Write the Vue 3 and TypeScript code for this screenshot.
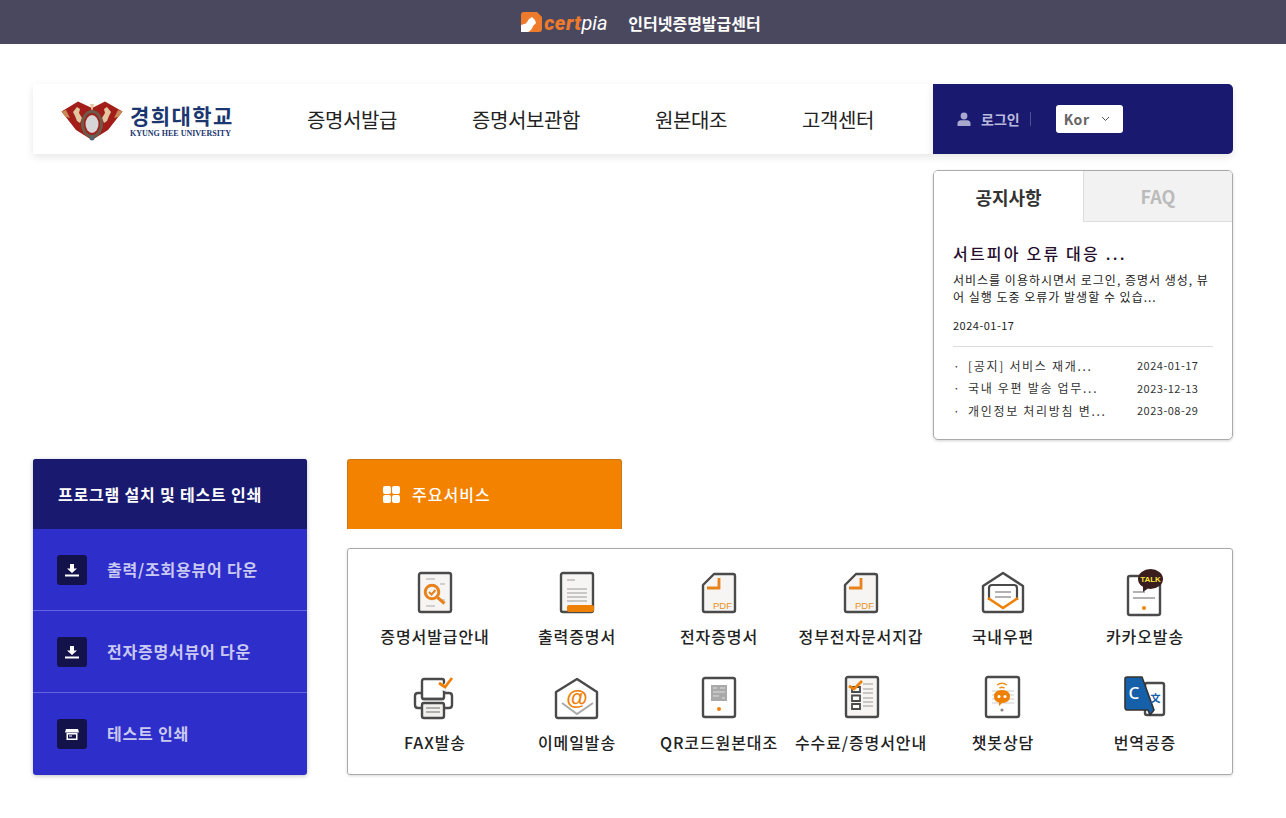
<script setup lang="ts">
interface Notice {
  title: string
  date: string
}

const navItems: string[] = ['증명서발급', '증명서보관함', '원본대조', '고객센터']

const notices: Notice[] = [
  { title: '[공지] 서비스 재개...', date: '2024-01-17' },
  { title: '국내 우편 발송 업무...', date: '2023-12-13' },
  { title: '개인정보 처리방침 변...', date: '2023-08-29' },
]

const downloads = [
  { label: '출력/조회용뷰어 다운', icon: 'down' },
  { label: '전자증명서뷰어 다운', icon: 'down' },
  { label: '테스트 인쇄', icon: 'print' },
]

const services = [
  { label: '증명서발급안내', icon: 'guide' },
  { label: '출력증명서', icon: 'paper' },
  { label: '전자증명서', icon: 'pdf' },
  { label: '정부전자문서지갑', icon: 'pdf' },
  { label: '국내우편', icon: 'post' },
  { label: '카카오발송', icon: 'kakao' },
  { label: 'FAX발송', icon: 'fax' },
  { label: '이메일발송', icon: 'email' },
  { label: 'QR코드원본대조', icon: 'qr' },
  { label: '수수료/증명서안내', icon: 'fee' },
  { label: '챗봇상담', icon: 'bot' },
  { label: '번역공증', icon: 'trans' },
]
</script>

<template>
  <div class="page">
    <div class="topbar">
      <svg class="cert-mark" width="21" height="20" viewBox="0 0 21 20">
        <path d="M3 0H16L21 5V17Q21 20 18 20H3Q0 20 0 17V3Q0 0 3 0Z" fill="#ee7a2c" />
        <path d="M0 20V13L5 11.5L8 7L11 5L14 8L15 11L12 14Q11 18 7 20Z" fill="#fff" />
      </svg>
      <span class="cert-name"><b>cert</b><i>pia</i></span>
      <span class="top-title">인터넷증명발급센터</span>
    </div>

    <main class="wrap">
      <header class="head">
        <div class="head-main">
          <div class="logo">
            <svg width="64" height="44" viewBox="0 0 64 44">
              <path d="M1.5 14.5L18 4.5L32 11L45 4.5L62.5 14.5L48 33L32 43L16 33Z" fill="#a31d1a" />
              <path d="M1.5 14.5L6 13L10 21L6 20ZM62.5 14.5L58 13L54 21L58 20Z" fill="#c98a55" />
              <path d="M13 15L17 10L20 12L19 16L22 21L20 26L17 24L15 19Z" fill="#e3c7a0" />
              <path d="M51 15L47 10L44 12L45 16L42 21L44 26L47 24L49 19Z" fill="#e3c7a0" />
              <path d="M30 7L32 15L34 7Z" fill="#e3c7a0" />
              <ellipse cx="32" cy="27" rx="9.5" ry="12.5" fill="none" stroke="#6d5a48" stroke-width="3" />
              <ellipse cx="32" cy="27" rx="6.5" ry="9" fill="#d6d6d6" />
              <circle cx="32" cy="41" r="2.5" fill="#54666c" />
            </svg>
            <div class="logo-text">
              <strong>경희대학교</strong>
              <small>KYUNG HEE UNIVERSITY</small>
            </div>
          </div>
          <nav class="nav">
            <a v-for="item in navItems" :key="item">{{ item }}</a>
          </nav>
        </div>
        <div class="head-side">
          <svg width="14" height="14" viewBox="0 0 14 14">
            <circle cx="7" cy="4" r="3.4" fill="#a9a9cf" />
            <path d="M0.5 14V11.5Q0.5 8.6 4 8.2H10Q13.5 8.6 13.5 11.5V14Z" fill="#a9a9cf" />
          </svg>
          <span class="login">로그인</span>
          <span class="sep"></span>
          <div class="lang">
            <span>Kor</span>
            <svg width="9" height="6" viewBox="0 0 9 6"><path d="M1 1L4.5 4.5L8 1" fill="none" stroke="#555" stroke-width="1" /></svg>
          </div>
        </div>
      </header>

      <section class="hero">
        <div class="board">
          <div class="tabs">
            <div class="tab on">공지사항</div>
            <div class="tab">FAQ</div>
          </div>
          <div class="board-body">
            <h3>서트피아 오류 대응 ...</h3>
            <p>서비스를 이용하시면서 로그인, 증명서 생성, 뷰어 실행 도중 오류가 발생할 수 있습...</p>
            <div class="lead-date">2024-01-17</div>
            <ul>
              <li v-for="n in notices" :key="n.date">
                <span class="dot">·</span>
                <span class="n-title">{{ n.title }}</span>
                <span class="n-date">{{ n.date }}</span>
              </li>
            </ul>
          </div>
        </div>
      </section>

      <section class="lower">
        <aside class="side">
          <div class="side-head">프로그램 설치 및 테스트 인쇄</div>
          <a v-for="d in downloads" :key="d.label" class="side-row">
            <span class="side-icon">
              <svg width="14" height="14" viewBox="0 0 14 14">
                <template v-if="d.icon === 'down'">
                  <path d="M5 1H9V5.5H12L7 10L2 5.5H5Z" fill="#fff" />
                  <rect x="0" y="11.5" width="14" height="2" fill="#fff" />
                </template>
                <template v-else>
                  <path d="M1 2H13L14 5.5H0Z" fill="#fff" />
                  <rect x="1.5" y="6" width="11" height="7" fill="#fff" />
                  <rect x="3" y="7.5" width="8" height="4" fill="#14124a" />
                  <rect x="4" y="8.5" width="3" height="1" fill="#fff" />
                </template>
              </svg>
            </span>
            <span class="side-label">{{ d.label }}</span>
          </a>
        </aside>

        <div class="svc">
          <div class="svc-tab">
            <svg width="17" height="17" viewBox="0 0 17 17">
              <rect width="8" height="8" rx="2" fill="#fff" />
              <rect x="9" width="8" height="8" rx="2" fill="#fff" />
              <rect y="9" width="8" height="8" rx="2" fill="#fff" />
              <rect x="9" y="9" width="8" height="8" rx="2" fill="#fff" />
            </svg>
            <span>주요서비스</span>
          </div>
          <div class="svc-panel">
            <a v-for="s in services" :key="s.label" class="svc-item">
              <svg class="svc-icon" width="48" height="48" viewBox="0 0 48 48">
                <template v-if="s.icon === 'guide'">
                  <rect x="8" y="3" width="32" height="39" rx="2" fill="#f6f5f3" stroke="#4a4a4a" stroke-width="2.4" />
                  <path d="M15 9H24M15 36H24M29 14H34M31 30H34" stroke="#aaa" stroke-width="1.2" />
                  <circle cx="21" cy="22" r="6.8" fill="none" stroke="#e8821c" stroke-width="3" />
                  <path d="M18 22L20.5 24.5L24.5 20" fill="none" stroke="#e8821c" stroke-width="2" />
                  <path d="M26.5 27.5L33.5 33.5" stroke="#e8821c" stroke-width="3" />
                </template>
                <template v-else-if="s.icon === 'paper'">
                  <rect x="8" y="3" width="32" height="39" rx="2" fill="#f6f5f3" stroke="#4a4a4a" stroke-width="2.4" />
                  <path d="M14 10H22M14 19H34M14 23H34M14 27H34M14 31H34" stroke="#999" stroke-width="1.2" />
                  <rect x="14" y="35" width="27" height="7" rx="2" fill="#ee8005" />
                </template>
                <template v-else-if="s.icon === 'pdf'">
                  <path d="M19 4H38Q40 4 40 6V40Q40 42 38 42H10Q8 42 8 40V15Z" fill="#f6f5f3" stroke="#4a4a4a" stroke-width="2.4" stroke-linejoin="round" />
                  <path d="M12 18H24V8" fill="none" stroke="#e8821c" stroke-width="2.8" />
                  <text x="18" y="38.5" class="pdf-text">PDF</text>
                </template>
                <template v-else-if="s.icon === 'post'">
                  <path d="M24 3L44 16V40Q44 42 42 42H6Q4 42 4 40V16Z" fill="#fff" stroke="#4a4a4a" stroke-width="2.4" stroke-linejoin="round" />
                  <path d="M10 30V18Q10 15 13 15H35Q38 15 38 18V30" fill="none" stroke="#4a4a4a" stroke-width="2.2" />
                  <path d="M16 22H32M16 27H32" stroke="#999" stroke-width="1.3" />
                  <path d="M9 28L24 38L39 28" fill="none" stroke="#ee8005" stroke-width="2.6" />
                </template>
                <template v-else-if="s.icon === 'kakao'">
                  <rect x="7" y="6" width="32" height="39" rx="2" fill="#fff" stroke="#4a4a4a" stroke-width="2.4" />
                  <path d="M12 22H24M12 28H34" stroke="#999" stroke-width="1.3" />
                  <circle cx="23" cy="38" r="2" fill="#ee8005" />
                  <ellipse cx="29.5" cy="9" rx="12.5" ry="10" fill="#3a1d1d" />
                  <path d="M22 15V22L29 17Z" fill="#3a1d1d" />
                  <text x="29.5" y="12" class="talk-text">TALK</text>
                </template>
                <template v-else-if="s.icon === 'fax'">
                  <rect x="11" y="3" width="22" height="20" rx="2" fill="#fff" stroke="#4a4a4a" stroke-width="2.4" />
                  <path d="M11 17H7Q4 17 4 20V29Q4 32 7 32H38Q41 32 41 29V20Q41 17 38 17H33" fill="none" stroke="#4a4a4a" stroke-width="2.4" />
                  <path d="M11 23H33" stroke="#4a4a4a" stroke-width="2.4" />
                  <rect x="11" y="27" width="22" height="15" rx="2" fill="#f1f0ee" stroke="#4a4a4a" stroke-width="2.4" />
                  <path d="M15 32H29M15 36H29" stroke="#999" stroke-width="1.3" />
                  <path d="M26 7L33 12L42 2" fill="none" stroke="#fff" stroke-width="5" />
                  <path d="M28 7L34 11L41 2" fill="none" stroke="#ee8005" stroke-width="2.8" />
                </template>
                <template v-else-if="s.icon === 'email'">
                  <path d="M24 3L44 16V40Q44 42 42 42H5Q3 42 3 40V16Z" fill="#fff" stroke="#4a4a4a" stroke-width="2.4" stroke-linejoin="round" />
                  <path d="M9 27L24 38L40 27" fill="none" stroke="#aaa" stroke-width="2" />
                  <text x="24" y="29" class="at-text">@</text>
                </template>
                <template v-else-if="s.icon === 'qr'">
                  <rect x="8" y="2" width="32" height="39" rx="2" fill="#fff" stroke="#4a4a4a" stroke-width="2.4" />
                  <rect x="16" y="9" width="16" height="16" fill="#a9a9a9" />
                  <path d="M18 12H22M25 12H30M18 16H30M18 20H24M27 22H30" stroke="#dedede" stroke-width="1" />
                  <circle cx="24" cy="33" r="2" fill="#ee8005" />
                </template>
                <template v-else-if="s.icon === 'fee'">
                  <rect x="9" y="1" width="32" height="40" rx="2" fill="#f6f5f3" stroke="#4a4a4a" stroke-width="2.4" />
                  <path d="M15 11H23V16H15ZM15 19.5H23V25H15ZM15 28H23V33H15Z" fill="#fff" stroke="#4a4a4a" stroke-width="1.8" />
                  <path d="M26 8H36M26 13H36M26 17H36M26 22H36M26 26H36M26 30H36" stroke="#999" stroke-width="1.1" />
                  <path d="M12 10L17 13L25 5" fill="none" stroke="#ee8005" stroke-width="2.8" />
                </template>
                <template v-else-if="s.icon === 'bot'">
                  <rect x="7" y="1" width="33" height="40" rx="2" fill="#fff" stroke="#4a4a4a" stroke-width="2.4" />
                  <path d="M13 15H35M13 19H35M13 23H35M13 27H35" stroke="#ccc" stroke-width="1.1" />
                  <path d="M18 9Q23 5.5 28 9M20.5 12Q23 10.5 25.5 12" fill="none" stroke="#e8921c" stroke-width="1.5" />
                  <path d="M23 14Q31 14 31 20.5Q31 27 23 27L20 30V26.5Q15 25.5 15 20.5Q15 14 23 14Z" fill="#ee8005" />
                  <circle cx="20" cy="20.5" r="1.5" fill="#fff" />
                  <circle cx="26" cy="20.5" r="1.5" fill="#fff" />
                  <circle cx="23" cy="34" r="1.6" fill="#888" />
                </template>
                <template v-else>
                  <rect x="24" y="7" width="19" height="32" rx="2" fill="#fff" stroke="#4a4a4a" stroke-width="2.4" />
                  <path d="M6 1H21L33 34L29 39L27 34H6Q4 34 4 31V3Q4 1 6 1Z" fill="#1560a8" stroke="#333" stroke-width="1.6" stroke-linejoin="round" />
                  <text x="13" y="23" class="c-text">C</text>
                  <text x="34.5" y="26" class="wen-text">文</text>
                </template>
              </svg>
              <span class="svc-label">{{ s.label }}</span>
            </a>
          </div>
        </div>
      </section>
    </main>
  </div>
</template>

<style scoped>
.page {
  font-family: "Noto Sans CJK KR", "Noto Sans", sans-serif;
  color: #222;
  background: #fff;
}
.topbar {
  height: 44px;
  box-sizing: border-box;
  padding: 1px 4px 0 0;
  background: #4a485e;
  display: flex;
  align-items: center;
  justify-content: center;
  color: #fff;
}
.cert-mark { margin-right: 2px; margin-top: -1px; }
.cert-name {
  font-family: Roboto, "Liberation Sans", sans-serif;
  font-size: 20px;
  font-style: italic;
  margin-right: 20px;
  width: 64px;
}
.cert-name b { color: #ee7a2c; font-weight: 900; letter-spacing: 0.5px; }
.cert-name i { font-weight: 400; }
.top-title { font-size: 16px; font-weight: 700; }

.wrap { padding: 40px 53px 43px 33px; }

.head { display: flex; height: 70px; }
.head-main {
  width: 900px;
  display: flex;
  align-items: center;
  background: #fff;
  box-shadow: 0 3px 8px rgba(0, 0, 0, 0.1);
}
.logo {
  display: flex;
  align-items: center;
  width: 274px;
  padding-left: 27px;
  box-sizing: border-box;
  gap: 6px;
}
.logo-text { display: flex; flex-direction: column; color: #1c3770; margin-top: 1px; }
.logo-text strong { font-size: 21px; line-height: 27px; font-weight: 700; letter-spacing: 1.4px; }
.logo-text small {
  font-family: "Liberation Serif", serif;
  font-size: 8px;
  line-height: 9px;
  font-weight: 700;
}
.nav { display: flex; gap: 75px; }
.nav a { font-size: 20px; font-weight: 400; color: #222; letter-spacing: -0.4px; }
.head-side {
  width: 300px;
  background: #191970;
  border-radius: 0 5px 5px 0;
  display: flex;
  align-items: center;
  padding-left: 24px;
  box-sizing: border-box;
  box-shadow: 0 3px 8px rgba(0, 0, 0, 0.1);
}
.login { margin-left: 10px; font-size: 14px; font-weight: 700; color: #b9b9de; }
.sep { width: 1px; height: 14px; background: #4f4f93; margin-left: 10px; }
.lang {
  margin-left: 25px;
  width: 67px;
  height: 28px;
  box-sizing: border-box;
  padding: 0 13px 0 8px;
  background: #fff;
  border-radius: 3px;
  display: flex;
  align-items: center;
  justify-content: space-between;
  font-size: 14px;
  font-weight: 700;
  color: #666;
  letter-spacing: 0.6px;
}

.hero { display: flex; justify-content: flex-end; margin-top: 16px; }
.board {
  width: 300px;
  height: 270px;
  box-sizing: border-box;
  border: 1px solid #aaa;
  border-radius: 5px;
  overflow: hidden;
  box-shadow: 0 1px 3px rgba(0, 0, 0, 0.18);
}
.tabs { display: flex; height: 51px; }
.tab {
  flex: 1;
  display: flex;
  align-items: center;
  justify-content: center;
  background: #f2f2f2;
  color: #bbb;
  font-size: 18px;
  font-weight: 700;
  border-bottom: 1px solid #ddd;
  border-left: 1px solid #ddd;
}
.tab.on {
  flex: 0 0 149px;
  background: #fff;
  color: #333;
  border: 0;
}
.board-body { padding: 19px 19px 0; }
.board-body h3 {
  margin: 0;
  font-size: 16px;
  font-weight: 500;
  line-height: 24px;
  color: #250d2c;
  letter-spacing: 2.2px;
}
.board-body p {
  margin: 6px 0 0;
  font-size: 12px;
  line-height: 17px;
  color: #222;
  letter-spacing: 1px;
}
.lead-date { margin-top: 12px; font-size: 11px; line-height: 16px; color: #222; letter-spacing: 0.5px; }
.board-body ul {
  list-style: none;
  margin: 13px 0 0;
  padding: 7px 0 0;
  border-top: 1px solid #ddd;
}
.board-body li {
  display: flex;
  height: 22.5px;
  align-items: center;
  font-size: 12px;
  color: #333;
}
.dot { width: 15px; }
.n-title { flex: 1; letter-spacing: 1.7px; }
.n-date { font-size: 11px; width: 76px; letter-spacing: 0.5px; }

.lower { display: flex; gap: 40px; margin-top: 19px; }
.side {
  width: 274px;
  height: 316px;
  border-radius: 3px;
  overflow: hidden;
  background: #2e2ecb;
  box-shadow: 0 1px 4px rgba(0, 0, 0, 0.25);
}
.side-head {
  height: 70px;
  background: #191970;
  display: flex;
  align-items: center;
  padding-left: 25px;
  color: #fff;
  font-size: 16px;
  font-weight: 700;
  letter-spacing: 0.8px;
}
.side-row {
  height: 82px;
  display: flex;
  align-items: center;
  padding-left: 24px;
  gap: 20px;
  color: #c9c9f2;
  font-size: 16px;
  font-weight: 700;
  letter-spacing: 0.8px;
  box-sizing: border-box;
  border-bottom: 1px solid #6464e0;
}
.side-row:last-child { border-bottom: 0; }
.side-label { margin-top: -2px; }
.side-icon {
  width: 30px;
  height: 30px;
  background: #14124a;
  border-radius: 3px;
  display: flex;
  align-items: center;
  justify-content: center;
}

.svc { width: 886px; }
.svc-tab {
  width: 275px;
  height: 70px;
  box-sizing: border-box;
  padding-bottom: 1px;
  background: #f38200;
  border: 1px solid #c9780f;
  border-bottom: 0;
  border-radius: 3px 3px 0 0;
  display: flex;
  align-items: center;
  padding-left: 35px;
  gap: 12px;
  color: #fff;
  font-size: 16px;
  font-weight: 500;
  letter-spacing: 1px;
}
.svc-panel {
  margin-top: 19px;
  height: 227px;
  box-sizing: border-box;
  border: 1px solid #aaa;
  border-radius: 3px;
  box-shadow: 0 1px 3px rgba(0, 0, 0, 0.15);
  padding: 21px 16px 0;
  display: grid;
  grid-template-columns: repeat(6, 142px);
  grid-auto-rows: 106px;
}
.svc-item {
  display: flex;
  flex-direction: column;
  align-items: center;
}
.svc-icon { overflow: visible; display: block; }
.svc-label {
  margin-top: 6px;
  font-size: 16px;
  font-weight: 500;
  line-height: 24px;
  color: #222;
  letter-spacing: 0.9px;
  white-space: nowrap;
}
.pdf-text { font-family: "Liberation Sans", sans-serif; font-size: 9.5px; fill: #e8921c; }
.talk-text {
  font-family: "Liberation Sans", sans-serif;
  font-size: 8px;
  font-weight: 700;
  fill: #f7e33a;
  text-anchor: middle;
}
.at-text {
  font-family: "Liberation Sans", sans-serif;
  font-size: 22px;
  font-weight: 700;
  fill: #ee8005;
  text-anchor: middle;
}
.c-text { font-family: "Noto Sans", sans-serif; font-size: 17px; font-weight: 500; fill: #fff; text-anchor: middle; }
.wen-text { font-family: "Noto Sans CJK KR", sans-serif; font-size: 10px; font-weight: 700; fill: #1560a8; text-anchor: middle; }
</style>
